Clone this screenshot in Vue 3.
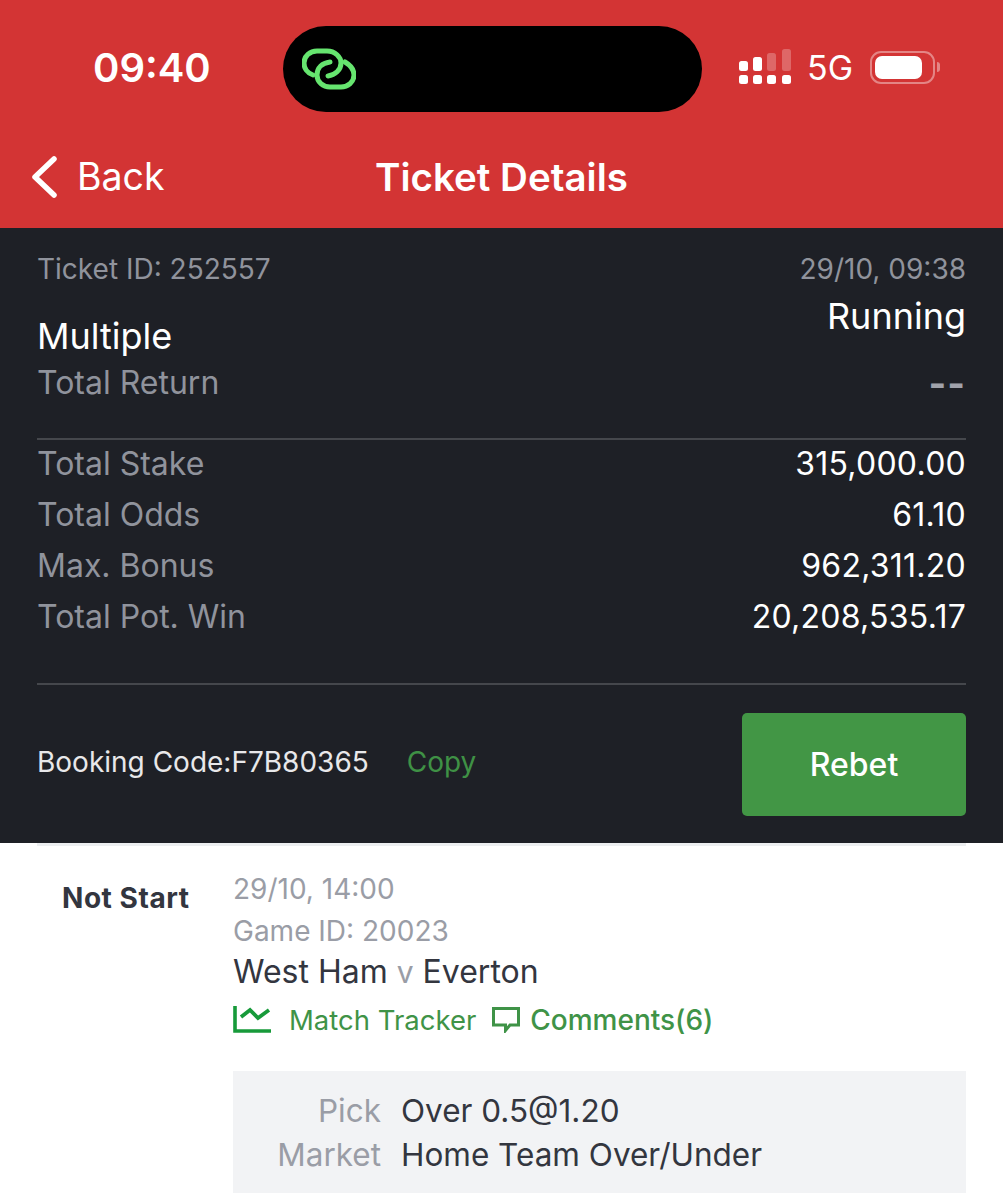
<template>
  <div class="page">
    <!-- red top -->
    <header class="top">
      <div class="status">
        <div class="time">09:40</div>
        <div class="island">
          <svg class="link-icon" viewBox="0 0 54 42" fill="none">
            <path d="M11 27 C5 25 2 20 2 15 C2 8 8 3 15 3 L25 3 C33 3 39 9 39 15 C39 22 33 27 26 28" />
            <path d="M43 14 C48 17 52 21 52 27 C52 34 46 39 39 39 L28 39 C21 39 15 34 15 27 C15 20 20 15 28 14" />
          </svg>
        </div>
        <div class="indicators">
          <svg class="signal" viewBox="0 0 52 35">
            <rect x="0" y="12" width="9" height="10" rx="2.5" fill="#fff" />
            <rect x="14" y="8" width="9" height="14" rx="2.5" fill="#fff" />
            <rect x="28" y="4" width="9" height="18" rx="2.5" fill="#fff" opacity="0.25" />
            <rect x="43" y="0" width="9" height="22" rx="2.5" fill="#fff" opacity="0.25" />
            <rect x="0" y="26" width="9" height="9" rx="2.5" fill="#fff" />
            <rect x="14" y="26" width="9" height="9" rx="2.5" fill="#fff" />
            <rect x="28" y="26" width="9" height="9" rx="2.5" fill="#fff" />
            <rect x="43" y="26" width="9" height="9" rx="2.5" fill="#fff" />
          </svg>
          <span class="net">5G</span>
          <div class="battery">
            <div class="battery-fill"></div>
          </div>
          <div class="battery-cap"></div>
        </div>
      </div>
      <div class="nav">
        <div class="back">
          <svg class="chevron" viewBox="0 0 28 44" fill="none">
            <path d="M24 4 L5 22 L24 40" />
          </svg>
          <span>Back</span>
        </div>
        <div class="nav-title">Ticket Details</div>
      </div>
    </header>

    <!-- ticket summary -->
    <section class="summary">
      <div class="row meta">
        <span>Ticket ID: 252557</span>
        <span>29/10, 09:38</span>
      </div>
      <div class="row headline">
        <span class="multiple">Multiple</span>
        <span class="running">Running</span>
      </div>
      <div class="row ret">
        <span class="label">Total Return</span>
        <span class="dash">--</span>
      </div>
      <div class="rule"></div>
      <div class="amounts">
        <div v-for="item in amounts" :key="item.label" class="row amount">
          <span class="label">{{ item.label }}</span>
          <span class="value">{{ item.value }}</span>
        </div>
      </div>
      <div class="rule second"></div>
      <div class="row booking">
        <div class="code-wrap">
          <span class="code">Booking Code:F7B80365</span>
          <span class="copy">Copy</span>
        </div>
        <button class="rebet">Rebet</button>
      </div>
    </section>

    <!-- selection -->
    <section class="selection">
      <div class="state">Not Start</div>
      <div class="detail">
        <div class="grey first">29/10, 14:00</div>
        <div class="grey">Game ID: 20023</div>
        <div class="teams">West Ham <span class="vs">v</span> Everton</div>
        <div class="links">
          <svg class="chart" viewBox="0 0 38 28" fill="none">
            <path d="M2 0 V25 H38" stroke-width="3.6" />
            <path d="M8 11 L17 4 L25 12 L36 4" stroke-width="3.8" />
          </svg>
          <span class="tracker">Match Tracker</span>
          <svg class="bubble" viewBox="0 0 28 26" fill="none">
            <path d="M1.5 1.5 H26.5 V18 H18 L13.5 23.5 V18 H1.5 Z" stroke-width="3" />
          </svg>
          <span class="comments">Comments(6)</span>
        </div>
        <div class="pick-box">
          <div class="pick-row">
            <span class="pick-label">Pick</span>
            <span>Over 0.5@1.20</span>
          </div>
          <div class="pick-row">
            <span class="pick-label">Market</span>
            <span>Home Team Over/Under</span>
          </div>
        </div>
      </div>
    </section>
  </div>
</template>

<script setup>
const amounts = [
  { label: "Total Stake", value: "315,000.00" },
  { label: "Total Odds", value: "61.10" },
  { label: "Max. Bonus", value: "962,311.20" },
  { label: "Total Pot. Win", value: "20,208,535.17" },
];
</script>

<style>
html,
body {
  margin: 0;
  background: #fff;
}
</style>

<style scoped>
* {
  box-sizing: border-box;
}

.page {
  width: 1003px;
  height: 1200px;
  overflow: hidden;
  font-family: Inter, "Liberation Sans", sans-serif;
  background: #fff;
}

/* red header */
.top {
  height: 228px;
  background: #d33434;
  color: #fff;
}

.status {
  height: 136px;
  padding-top: 26px;
  display: flex;
  align-items: flex-start;
}

.time {
  width: 283px;
  padding: 19px 0 0 93px;
  font-size: 40px;
  line-height: 46px;
  font-weight: 600;
}

.island {
  width: 419px;
  height: 86px;
  border-radius: 43px;
  background: #000;
  display: flex;
  align-items: center;
  padding-left: 19px;
}

.link-icon {
  width: 54px;
  height: 42px;
  stroke: #66e56f;
  stroke-width: 5;
  stroke-linecap: round;
}

.indicators {
  display: flex;
  align-items: center;
  height: 86px;
  padding-left: 37px;
}

.signal {
  width: 52px;
  height: 35px;
  margin-top: -5px;
}

.net {
  font-size: 34px;
  font-weight: 400;
  margin-left: 16px;
  margin-top: -3px;
}

.battery {
  width: 65px;
  height: 33px;
  margin-left: 17px;
  margin-top: -4px;
  padding: 3px;
  border: 2px solid rgba(255, 255, 255, 0.4);
  border-radius: 11px;
}

.battery-fill {
  width: 47px;
  height: 23px;
  background: #fff;
  border-radius: 7px;
}

.battery-cap {
  width: 3px;
  height: 10px;
  margin-left: 2px;
  margin-top: -4px;
  background: rgba(255, 255, 255, 0.4);
  border-radius: 0 4px 4px 0;
}

.nav {
  position: relative;
  height: 92px;
  display: flex;
  justify-content: center;
}

.back {
  position: absolute;
  left: 30px;
  top: 19px;
  display: flex;
  align-items: center;
  gap: 19px;
  font-size: 37.5px;
  line-height: 44px;
}

.chevron {
  width: 28px;
  height: 44px;
  stroke: #fff;
  stroke-width: 5.5;
  stroke-linecap: round;
  stroke-linejoin: round;
}

.nav-title {
  padding-top: 19px;
  font-size: 38.5px;
  line-height: 44px;
  font-weight: 600;
}

/* dark summary */
.summary {
  height: 615px;
  padding: 21px 37px 0;
  background: #1e2026;
  color: #fff;
  font-size: 32px;
}

.row {
  display: flex;
  justify-content: space-between;
}

.meta {
  font-size: 28px;
  line-height: 40px;
  color: #90939c;
}

.headline {
  height: 71px;
  line-height: 40px;
  font-size: 36px;
}

.multiple {
  padding-top: 27px;
}

.running {
  margin-top: 7px;
}

.ret {
  height: 70px;
  line-height: 46px;
}

.label {
  color: #90939c;
}

.value {
  letter-spacing: 0.25px;
}

.dash {
  color: #a0a2ab;
  font-size: 38px;
  font-weight: 700;
  letter-spacing: 1px;
}

.rule {
  height: 2px;
  margin-top: 8px;
  background: #45474c;
}

.rule.second {
  margin-top: 39px;
}

.amount {
  height: 51px;
  line-height: 48px;
}

.booking {
  align-items: center;
  margin-top: 28px;
}

.code-wrap {
  padding-bottom: 8px;
}

.code {
  font-size: 28px;
  color: #e8e8ea;
}

.copy {
  margin-left: 38px;
  font-size: 28px;
  color: #3f9145;
}

.rebet {
  width: 224px;
  height: 103px;
  border: none;
  border-radius: 5px;
  background: #429645;
  color: #fff;
  font-family: inherit;
  font-size: 32px;
  font-weight: 500;
}

/* selection */
.selection {
  display: flex;
  margin: 0 37px;
  padding-top: 22px;
  border-top: 3px solid #eceef0;
}

.state {
  width: 196px;
  padding: 13px 0 0 25px;
  font-size: 28px;
  line-height: 34px;
  font-weight: 700;
  letter-spacing: 0.55px;
  color: #33363f;
}

.detail {
  width: 733px;
}

.grey {
  font-size: 28px;
  line-height: 42px;
  color: #9a9da6;
}

.teams {
  font-size: 32px;
  line-height: 40px;
  color: #33363f;
}

.vs {
  color: #9a9da6;
  font-size: 30px;
}

.links {
  display: flex;
  align-items: center;
  height: 56px;
  font-size: 27.5px;
  color: #3f9347;
}

.chart {
  width: 38px;
  height: 28px;
  stroke: #179a3a;
}

.tracker {
  margin-left: 18px;
}

.bubble {
  width: 28px;
  height: 26px;
  margin-left: 16px;
  stroke: #3f9347;
}

.comments {
  margin-left: 10px;
  font-size: 28px;
  font-weight: 500;
}

.pick-box {
  margin-top: 23px;
  height: 122px;
  padding-top: 18px;
  background: #f2f3f5;
  font-size: 31.5px;
  color: #33363f;
}

.pick-row {
  display: flex;
  gap: 20px;
  line-height: 44px;
}

.pick-label {
  width: 148px;
  text-align: right;
  color: #9a9da6;
}
</style>
